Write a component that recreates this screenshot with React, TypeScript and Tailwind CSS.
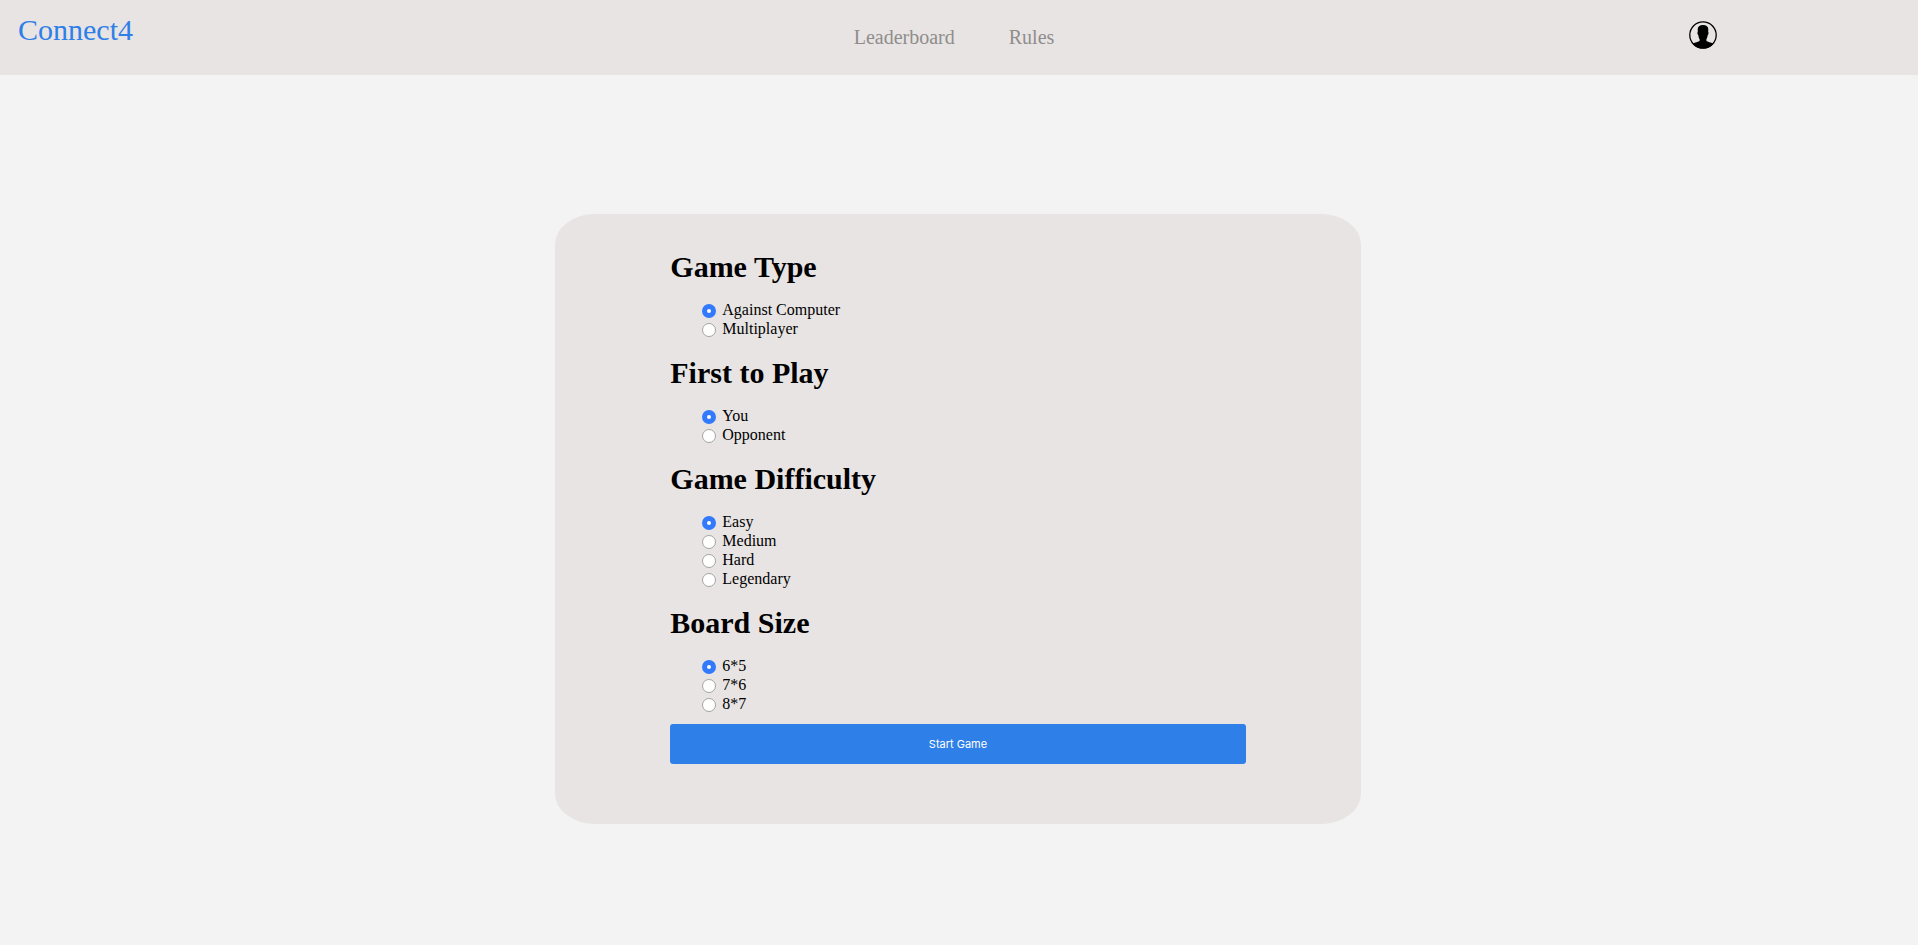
import { useState } from "react";

type Group = { name: string; title: string; options: string[] };

const groups: Group[] = [
  { name: "type", title: "Game Type", options: ["Against Computer", "Multiplayer"] },
  { name: "first", title: "First to Play", options: ["You", "Opponent"] },
  { name: "difficulty", title: "Game Difficulty", options: ["Easy", "Medium", "Hard", "Legendary"] },
  { name: "size", title: "Board Size", options: ["6*5", "7*6", "8*7"] },
];

function ProfileIcon() {
  return (
    <svg viewBox="0 0 28 28" className="size-7" aria-hidden="true">
      <circle cx="14" cy="14" r="13.2" fill="none" stroke="#000" strokeWidth="1.3" />
      <path d="M14 4C10.500 4 8.700 5.600 8.700 8.600c0 1 .1 1.800.1 2.500-.6.300-.5 1.600.1 2.700.3.500.5.600.6 1.100.2 1.500.5 2.500 1.100 3.200v1.600c-.9 1.300-4.700 1.400-6.900 3.200C6 26 9.800 27.600 14 27.600s8-1.600 10.300-4.700c-2.200-1.800-6-1.900-6.900-3.200v-1.600c.6-.7.900-1.700 1.100-3.200.1-.5.300-.6.600-1.100.6-1.100.7-2.400.1-2.700 0-.7.1-1.500.1-2.500C19.300 5.600 17.500 4 14 4z" />
    </svg>
  );
}

function Header() {
  return (
    <header className="grid h-[75px] grid-cols-[1fr_auto_1fr] items-start bg-[#e8e4e3] pr-7 pl-[18px]">
      <a href="#" className="mt-3 justify-self-start text-[30px] leading-9 text-[#2f7fe8]">
        Connect4
      </a>
      <nav className="mt-[25px] flex gap-[54px] text-xl leading-6 text-[#8f8d8c]">
        <a href="#leaderboard">Leaderboard</a>
        <a href="#rules">Rules</a>
      </nav>
      <button type="button" aria-label="Profile" className="mt-[21px] mr-[173px] justify-self-end">
        <ProfileIcon />
      </button>
    </header>
  );
}

function RadioGroup({ group }: { group: Group }) {
  const [value, setValue] = useState(group.options[0]);
  return (
    <fieldset className="mb-4 last-of-type:mb-[10px]">
      <legend className="mb-4 text-[30px] leading-9 font-bold">{group.title}</legend>
      {group.options.map((option) => (
        <label key={option} className="ml-8 flex h-[19px] w-fit items-start gap-[6px] text-base leading-[18px]">
          <input
            type="radio"
            name={group.name}
            value={option}
            checked={value === option}
            onChange={() => setValue(option)}
            className="mt-[3px] size-[14px] appearance-none rounded-full border border-[#a5a3a3] bg-white checked:border-5 checked:border-[#3279fb]"
          />
          {option}
        </label>
      ))}
    </fieldset>
  );
}

export default function App() {
  return (
    <div className="min-h-screen bg-[#f3f3f3] font-['Liberation_Serif',serif] text-black">
      <Header />
      <main className="flex justify-center pt-[139px]">
        <form
          onSubmit={(e) => e.preventDefault()}
          className="mr-0.5 w-[42%] rounded-[5%] bg-[#e8e4e3] px-[6%] pt-[35px] pb-[60px]"
        >
          {groups.map((group) => (
            <RadioGroup key={group.name} group={group} />
          ))}
          <button
            type="submit"
            className="h-10 w-full rounded-[3px] bg-[#2f7fe8] font-['Inter',sans-serif] text-[11px] text-white"
          >
            Start Game
          </button>
        </form>
      </main>
    </div>
  );
}
